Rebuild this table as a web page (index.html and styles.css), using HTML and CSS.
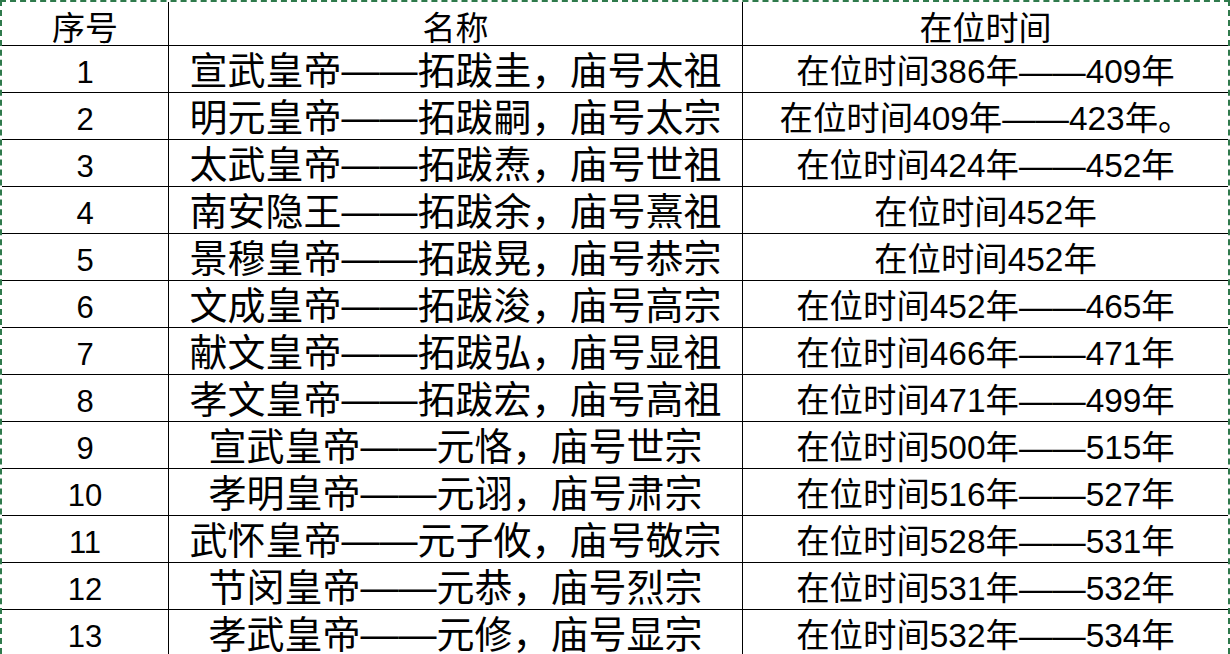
FILE: index.html
```html
<!DOCTYPE html>
<html lang="zh-CN">
<head>
<meta charset="utf-8">
<title>北魏皇帝</title>
<link rel="stylesheet" href="styles.css">
</head>
<body>
<div class="sheet">
  <div class="grid">
    <div class="cell head c1">序号</div>
    <div class="cell head c2">名称</div>
    <div class="cell head c3">在位时间</div>

    <div class="cell num c1">1</div>
    <div class="cell name c2">宣武皇帝——拓跋圭，庙号太祖</div>
    <div class="cell time c3">在位时间386年——409年</div>

    <div class="cell num c1">2</div>
    <div class="cell name c2">明元皇帝——拓跋嗣，庙号太宗</div>
    <div class="cell time c3">在位时间409年——423年。</div>

    <div class="cell num c1">3</div>
    <div class="cell name c2">太武皇帝——拓跋焘，庙号世祖</div>
    <div class="cell time c3">在位时间424年——452年</div>

    <div class="cell num c1">4</div>
    <div class="cell name c2">南安隐王——拓跋余，庙号熹祖</div>
    <div class="cell time c3">在位时间452年</div>

    <div class="cell num c1">5</div>
    <div class="cell name c2">景穆皇帝——拓跋晃，庙号恭宗</div>
    <div class="cell time c3">在位时间452年</div>

    <div class="cell num c1">6</div>
    <div class="cell name c2">文成皇帝——拓跋浚，庙号高宗</div>
    <div class="cell time c3">在位时间452年——465年</div>

    <div class="cell num c1">7</div>
    <div class="cell name c2">献文皇帝——拓跋弘，庙号显祖</div>
    <div class="cell time c3">在位时间466年——471年</div>

    <div class="cell num c1">8</div>
    <div class="cell name c2">孝文皇帝——拓跋宏，庙号高祖</div>
    <div class="cell time c3">在位时间471年——499年</div>

    <div class="cell num c1">9</div>
    <div class="cell name c2">宣武皇帝——元恪，庙号世宗</div>
    <div class="cell time c3">在位时间500年——515年</div>

    <div class="cell num c1">10</div>
    <div class="cell name c2">孝明皇帝——元诩，庙号肃宗</div>
    <div class="cell time c3">在位时间516年——527年</div>

    <div class="cell num c1">11</div>
    <div class="cell name c2">武怀皇帝——元子攸，庙号敬宗</div>
    <div class="cell time c3">在位时间528年——531年</div>

    <div class="cell num c1">12</div>
    <div class="cell name c2">节闵皇帝——元恭，庙号烈宗</div>
    <div class="cell time c3">在位时间531年——532年</div>

    <div class="cell num c1">13</div>
    <div class="cell name c2">孝武皇帝——元修，庙号显宗</div>
    <div class="cell time c3">在位时间532年——534年</div>
  </div>
</div>
</body>
</html>
```
FILE: styles.css
```css
html, body {
  margin: 0;
  padding: 0;
  background: #ffffff;
}

.sheet {
  width: 1230px;
  height: 654px;
  overflow: hidden;
  box-sizing: border-box;
  border-top: 2px dashed #2f7a4c;
  border-left: 2px dashed #2f7a4c;
  border-right: 2px dashed #2f7a4c;
  background: #ffffff;
}

.grid {
  display: grid;
  grid-template-columns: 167px 574px 1fr;
  grid-template-rows: 44px;
  grid-auto-rows: 47px;
}

.cell {
  box-sizing: border-box;
  border-bottom: 1px solid #000000;
  display: flex;
  align-items: center;
  justify-content: center;
  padding-top: 6px;
  white-space: nowrap;
  color: #000000;
  font-family: "Liberation Sans", "Noto Sans CJK SC", sans-serif;
  line-height: 1;
}

.c1, .c2 {
  border-right: 1px solid #000000;
}

.head {
  font-family: "Noto Sans CJK SC", sans-serif;
  font-size: 33px;
  padding-top: 6px;
}

.num {
  font-size: 31px;
}

.name {
  font-size: 38px;
  padding-top: 4px;
}

.time {
  font-size: 33.4px;
}
```
